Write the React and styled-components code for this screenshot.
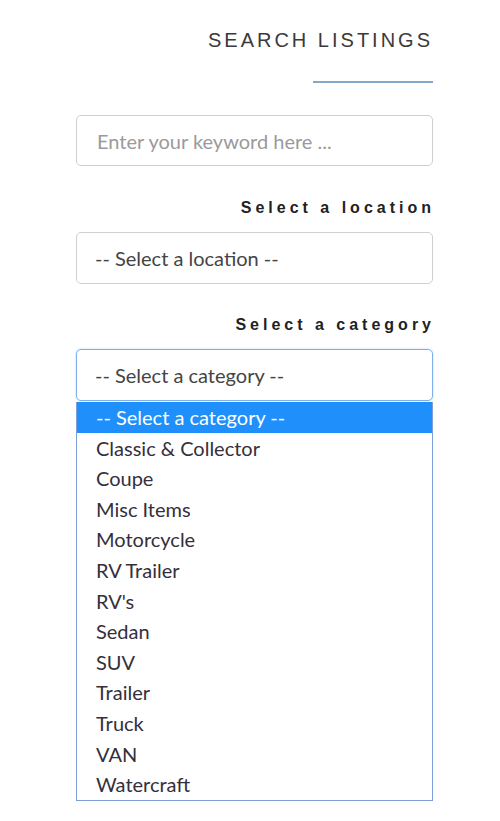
import React from 'react';
import styled, { createGlobalStyle } from 'styled-components';

const GlobalStyle = createGlobalStyle`
  body {
    margin: 0;
    background: #fff;
  }
`;

const Panel = styled.div`
  width: 357px;
  margin-left: 76px;
  padding-top: 28px;
  display: flex;
  flex-direction: column;
  align-items: flex-end;
`;

const Title = styled.h2`
  margin: 0;
  font-family: "Liberation Sans", Arial, sans-serif;
  font-weight: 400;
  font-size: 20px;
  line-height: 24px;
  letter-spacing: 3px;
  color: #3a3a3a;
`;

const Rule = styled.div`
  width: 120px;
  height: 2px;
  margin-top: 29px;
  background: #86a6cc;
`;

const Label = styled.label`
  margin-top: ${(p) => p.$top}px;
  font-family: "Liberation Sans", Arial, sans-serif;
  font-weight: 700;
  font-size: 16px;
  line-height: 18px;
  letter-spacing: 4px;
  margin-right: -2px;
  color: #222;
`;

const Field = styled.div`
  box-sizing: border-box;
  width: 100%;
  height: ${(p) => p.$h}px;
  margin-top: ${(p) => p.$top}px;
  display: flex;
  align-items: center;
  padding-left: ${(p) => (p.$placeholder ? 20 : 18)}px;
  border: 1px solid ${(p) => (p.$focus ? '#7fb0ea' : '#cfcfcf')};
  border-radius: 5px;
  box-shadow: ${(p) => (p.$focus ? '0 0 2px rgba(102,175,233,0.6)' : 'none')};
  font-family: "Lato", "Open Sans", sans-serif;
  font-size: 20px;
  color: ${(p) => (p.$placeholder ? '#9a9a9a' : '#444')};
`;

const List = styled.ul`
  box-sizing: border-box;
  width: 100%;
  margin: 1px 0 0;
  padding: 0;
  list-style: none;
  background: #fff;
  border: 1px solid #7e9fd6;
  border-top: none;
`;

const Item = styled.li`
  height: 30.6px;
  line-height: 30.6px;
  padding-left: 19px;
  font-family: "Lato", "Open Sans", sans-serif;
  font-size: 20px;
  color: ${(p) => (p.$active ? '#fff' : '#352f3c')};
  background: ${(p) => (p.$active ? '#1e8ffb' : 'transparent')};
`;

const categories = [
  '-- Select a category --',
  'Classic & Collector',
  'Coupe',
  'Misc Items',
  'Motorcycle',
  'RV Trailer',
  "RV's",
  'Sedan',
  'SUV',
  'Trailer',
  'Truck',
  'VAN',
  'Watercraft',
];

const App = () => {
  return (
    <>
      <GlobalStyle />
      <Panel>
        <Title>SEARCH LISTINGS</Title>
        <Rule />
        <Field $h={51} $top={32} $placeholder>Enter your keyword here ...</Field>
        <Label $top={33}>Select a location</Label>
        <Field $h={52} $top={15}>-- Select a location --</Field>
        <Label $top={32}>Select a category</Label>
        <Field $h={52} $top={15} $focus>-- Select a category --</Field>
        <List>
          {categories.map((c, i) => (
            <Item key={c} $active={i === 0}>{c}</Item>
          ))}
        </List>
      </Panel>
    </>
  );
};

export default App;
